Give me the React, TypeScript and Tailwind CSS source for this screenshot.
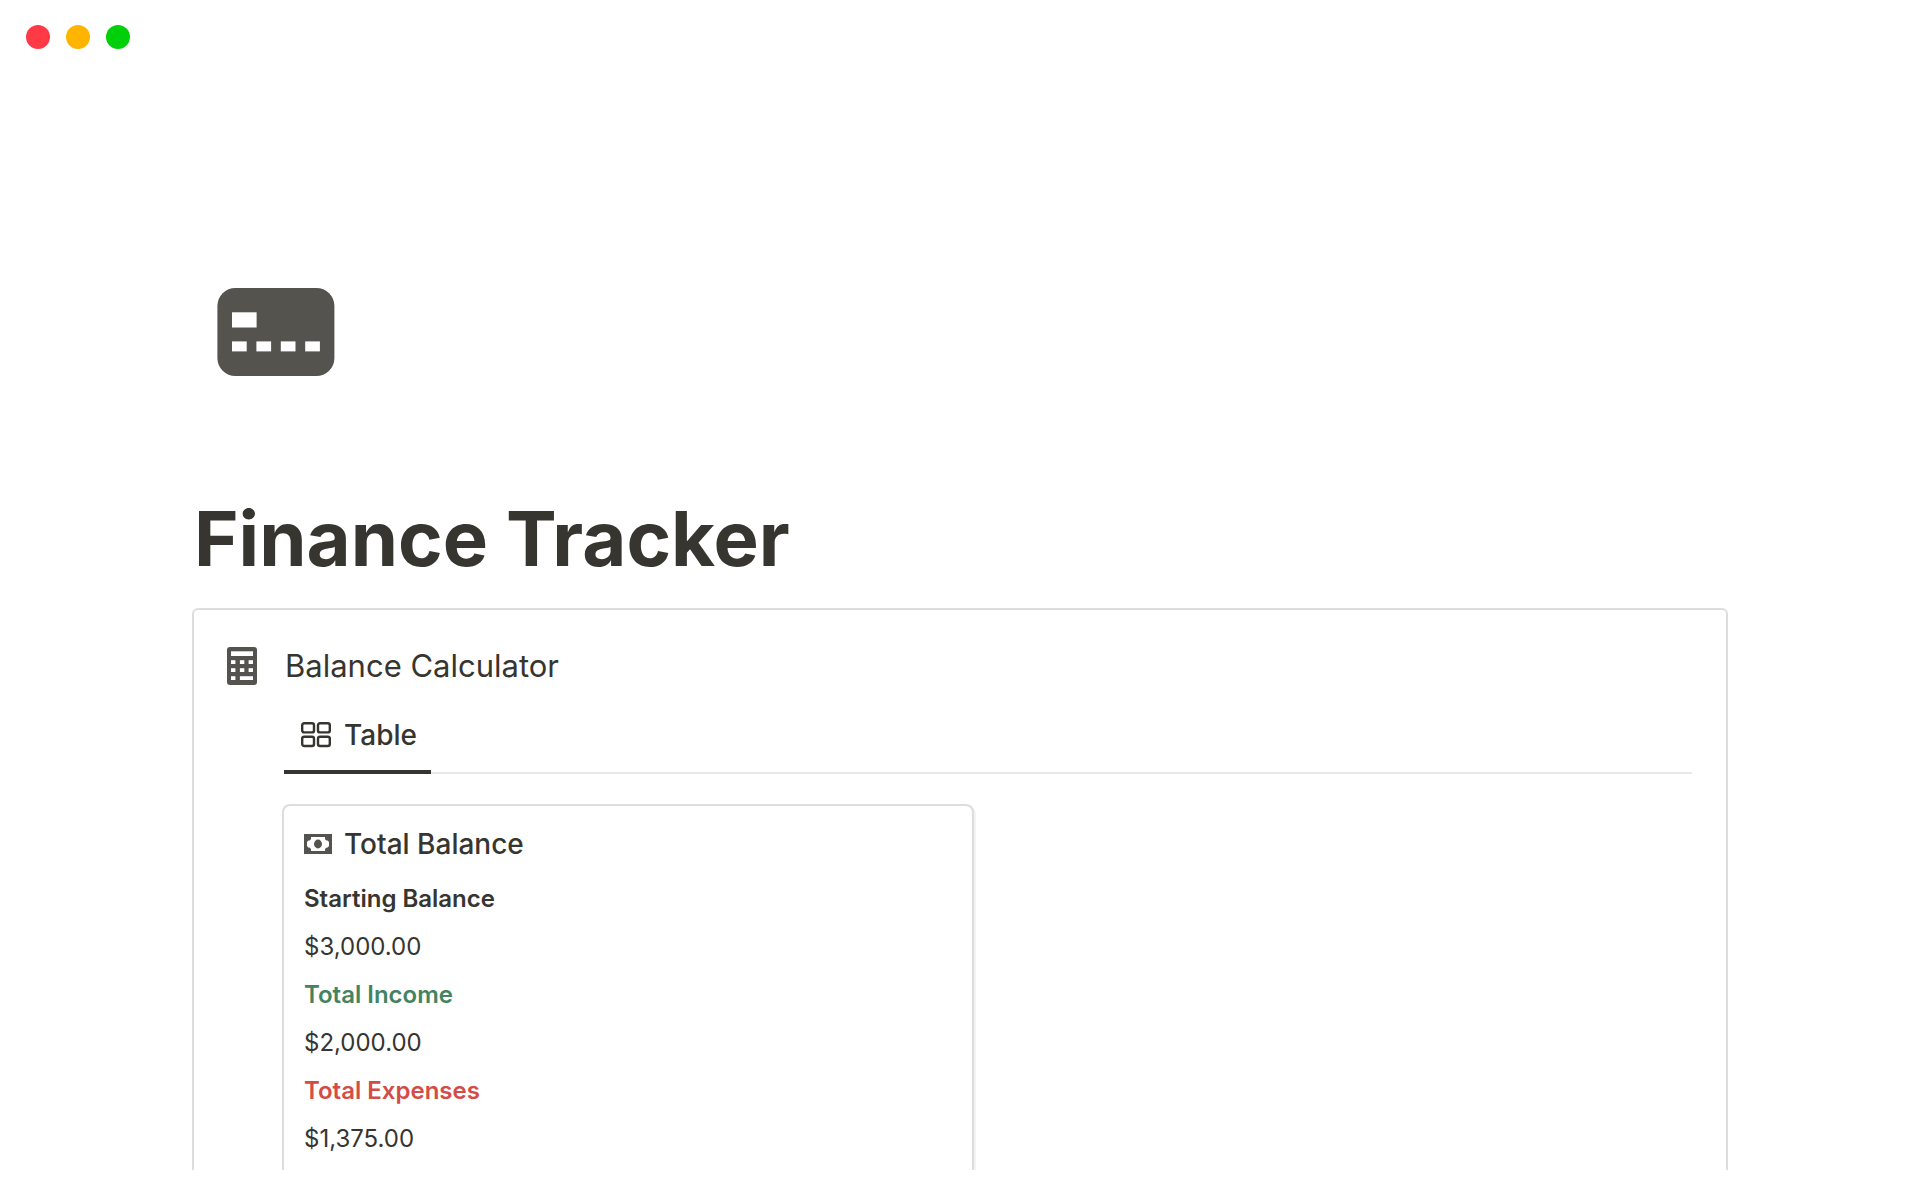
const windowControls = [
  { label: "Close", color: "bg-[#ff3945]" },
  { label: "Minimize", color: "bg-[#ffb400]" },
  { label: "Zoom", color: "bg-[#00d00a]" },
];

const balanceRows = [
  { label: "Starting Balance", value: "$3,000.00", color: "text-[#37352f]" },
  { label: "Total Income", value: "$2,000.00", color: "text-[#448361]" },
  { label: "Total Expenses", value: "$1,375.00", color: "text-[#d44c47]" },
];

function CreditCardIcon() {
  return (
    <svg width="118" height="88" viewBox="0 0 118 88" aria-hidden="true">
      <rect x="0.4" width="117" height="88" rx="18" fill="#55534e" />
      <g fill="#fff">
        <rect x="15" y="24.3" width="24.6" height="15.2" />
        <rect x="15" y="53.4" width="14.7" height="10" />
        <rect x="39.4" y="53.4" width="14.7" height="10" />
        <rect x="63.8" y="53.4" width="14.7" height="10" />
        <rect x="88.2" y="53.4" width="14.7" height="10" />
      </g>
    </svg>
  );
}

function CalculatorIcon() {
  return (
    <svg width="30" height="38" viewBox="0 0 30 38" aria-hidden="true">
      <rect width="30" height="38" rx="3" fill="#55534e" />
      <g fill="#fff">
        <rect x="4" y="4.3" width="22" height="4.7" />
        {[13.2, 21.2].map((y) =>
          [4, 12.9, 21.6].map((x) => (
            <rect key={`${x}-${y}`} x={x} y={y} width="4.4" height="3.8" />
          ))
        )}
        <rect x="4" y="29.2" width="4.4" height="3.8" />
        <rect x="12.9" y="29.2" width="13.1" height="3.8" />
      </g>
    </svg>
  );
}

function GalleryIcon() {
  return (
    <svg
      width="30"
      height="26"
      viewBox="0 0 30 26"
      fill="none"
      stroke="#37352f"
      strokeWidth="2.4"
      aria-hidden="true"
    >
      <rect x="1.2" y="1.2" width="11.8" height="9.2" rx="2" />
      <rect x="17" y="1.2" width="11.8" height="9.2" rx="2" />
      <rect x="1.2" y="14.8" width="11.8" height="9.2" rx="2" />
      <rect x="17" y="14.8" width="11.8" height="9.2" rx="2" />
    </svg>
  );
}

function CashIcon() {
  return (
    <svg width="28" height="20" viewBox="0 0 28 20" aria-hidden="true">
      <rect width="28" height="20" fill="#55534e" />
      <path
        d="M7 3h14v1a2.6 2.6 0 0 0 2.6 2.6L25 8v4l-1.4 1.4A2.6 2.6 0 0 0 21 16v1H7v-1a2.6 2.6 0 0 0-2.6-2.6L3 12V8l1.4-1.4A2.6 2.6 0 0 0 7 4z"
        fill="#fff"
      />
      <ellipse cx="14" cy="10" rx="4" ry="4.4" fill="#55534e" />
    </svg>
  );
}

function BalanceCard() {
  return (
    <article className="rounded-md px-5 pt-5 pb-10 ring-2 ring-[#dddddc] shadow-[2px_2px_0_2px_#f3f3f3]">
      <h3 className="flex items-center gap-3 text-[28px] leading-9 font-medium">
        <CashIcon />
        Total Balance
      </h3>
      <dl className="mt-[13px] text-2xl/12">
        {balanceRows.map((row) => (
          <div key={row.label}>
            <dt className={`font-semibold ${row.color}`}>{row.label}</dt>
            <dd>{row.value}</dd>
          </div>
        ))}
      </dl>
    </article>
  );
}

export default function App() {
  return (
    <div className="flex h-screen flex-col overflow-hidden bg-white pb-[30px] font-['Inter',sans-serif] text-[#37352f]">
      <header className="flex gap-4 px-[26px] pt-[25px]">
        {windowControls.map((control) => (
          <button
            key={control.label}
            type="button"
            aria-label={control.label}
            className={`size-6 rounded-full ${control.color}`}
          />
        ))}
      </header>

      <main className="flex min-h-0 flex-1 flex-col px-48 pt-[239px]">
        <div className="pl-[25px]">
          <CreditCardIcon />
        </div>
        <h1 className="mt-[114px] pl-0.5 text-[76px] leading-24 font-bold">Finance Tracker</h1>

        <section className="mt-[22px] min-h-0 flex-1 overflow-hidden rounded-t-md border-2 border-b-0 border-[#dddddc] pt-9 pr-[34px] pl-[33px]">
          <h2 className="flex items-center gap-7 text-[31px] leading-10">
            <CalculatorIcon />
            Balance Calculator
          </h2>

          <div className="ml-[57px]">
            <div role="tablist" className="mt-[19px] flex shadow-[inset_0_-2px_0_#e8e8e7]">
              <button
                type="button"
                role="tab"
                aria-selected="true"
                className="flex items-center gap-[13px] border-b-4 border-[#37352f] pt-3 pr-3.5 pb-[17px] pl-[17px] text-[28px] leading-9 font-medium"
              >
                <GalleryIcon />
                Table
              </button>
            </div>

            <div role="tabpanel" className="mt-8 grid grid-cols-2 gap-8">
              <BalanceCard />
            </div>
          </div>
        </section>
      </main>
    </div>
  );
}
